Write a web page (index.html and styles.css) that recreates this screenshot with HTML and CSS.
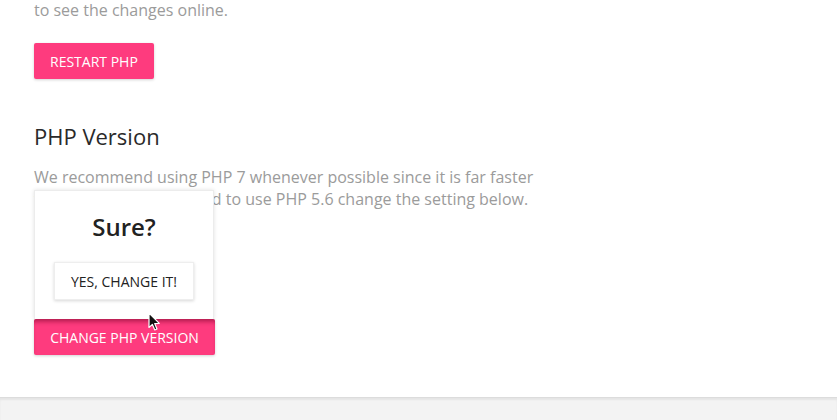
FILE: index.html
```html
<!DOCTYPE html>
<html>
<head>
<meta charset="utf-8">
<link rel="stylesheet" href="styles.css">
</head>
<body>
<main class="card">
  <p class="text first">to see the changes online.</p>
  <button class="btn">Restart PHP</button>
  <h2 class="heading">PHP Version</h2>
  <p class="text">We recommend using PHP 7 whenever possible since it is far faster<br>than PHP 5.6. If you need to use PHP 5.6 change the setting below.</p>
  <div class="action">
    <div class="popover">
      <div class="popover-title">Sure?</div>
      <button class="btn-confirm">Yes, change it!</button>
    </div>
    <button class="btn btn-change">Change PHP Version</button>
    <svg class="cursor" width="13" height="20" viewBox="0 0 13 20"><path d="M1 1 L1 15.5 L4.4 12.4 L6.8 18 L9 17 L6.7 11.6 L11.3 11.3 Z" fill="#111" stroke="#fff" stroke-width="1.2" stroke-linejoin="round"/></svg>
  </div>
</main>
<footer class="below"></footer>
</body>
</html>
```
FILE: styles.css
```css
html, body {
  margin: 0;
  padding: 0;
  background: #f3f3f3;
  font-family: "Open Sans", "Noto Sans", sans-serif;
}
.card {
  background: #fff;
  padding: 0 34px 41px;
  height: 397px;
  box-sizing: border-box;
  overflow: hidden;
}
.below {
  height: 23px;
  background: #f3f3f3;
  border-top: 1px solid #dcdcdc;
  box-shadow: inset 0 2px 2px rgba(0,0,0,0.06);
}
.text {
  margin: 0;
  font-size: 16px;
  line-height: 22px;
  color: #9b9b9b;
}
.text.first {
  margin-top: -1px;
}
.btn {
  display: block;
  border: none;
  background: #fe3b7e;
  color: #fff;
  font-family: "Open Sans", "Noto Sans", sans-serif;
  font-size: 14px;
  text-transform: uppercase;
  height: 36px;
  padding: 0 16px;
  border-radius: 2px;
  box-shadow: 0 1px 3px rgba(0,0,0,0.18);
  margin-top: 22px;
  cursor: pointer;
}
.heading {
  margin: 42px 0 15px;
  font-weight: 400;
  font-size: 22px;
  line-height: 30px;
  color: #2a2a2a;
}
.action {
  position: relative;
  width: 181px;
  margin-top: 109px;
}
.btn-change {
  margin-top: 0;
  width: 181px;
  padding: 0;
  box-shadow: inset 0 5px 4px -2px rgba(120,0,40,0.45), 0 1px 3px rgba(0,0,0,0.18);
}
.popover {
  position: absolute;
  left: 0;
  bottom: 100%;
  width: 180px;
  height: 129px;
  box-sizing: border-box;
  background: #fff;
  border: 1px solid #ececec;
  border-bottom: none;
  box-shadow: 0 0 4px rgba(0,0,0,0.12);
  display: flex;
  flex-direction: column;
  align-items: center;
  z-index: 2;
}
.popover-title {
  margin-top: 19px;
  font-size: 24px;
  font-weight: 600;
  line-height: 34px;
  color: #222;
}
.btn-confirm {
  margin-top: 18px;
  width: 140px;
  height: 38px;
  background: #fff;
  border: 1px solid #eeeeee;
  box-shadow: 0 1px 3px rgba(0,0,0,0.16);
  font-family: "Open Sans", "Noto Sans", sans-serif;
  font-size: 14px;
  text-transform: uppercase;
  color: #222;
  padding: 0;
}
.cursor {
  position: absolute;
  left: 114px;
  top: -7px;
  z-index: 3;
}
```
